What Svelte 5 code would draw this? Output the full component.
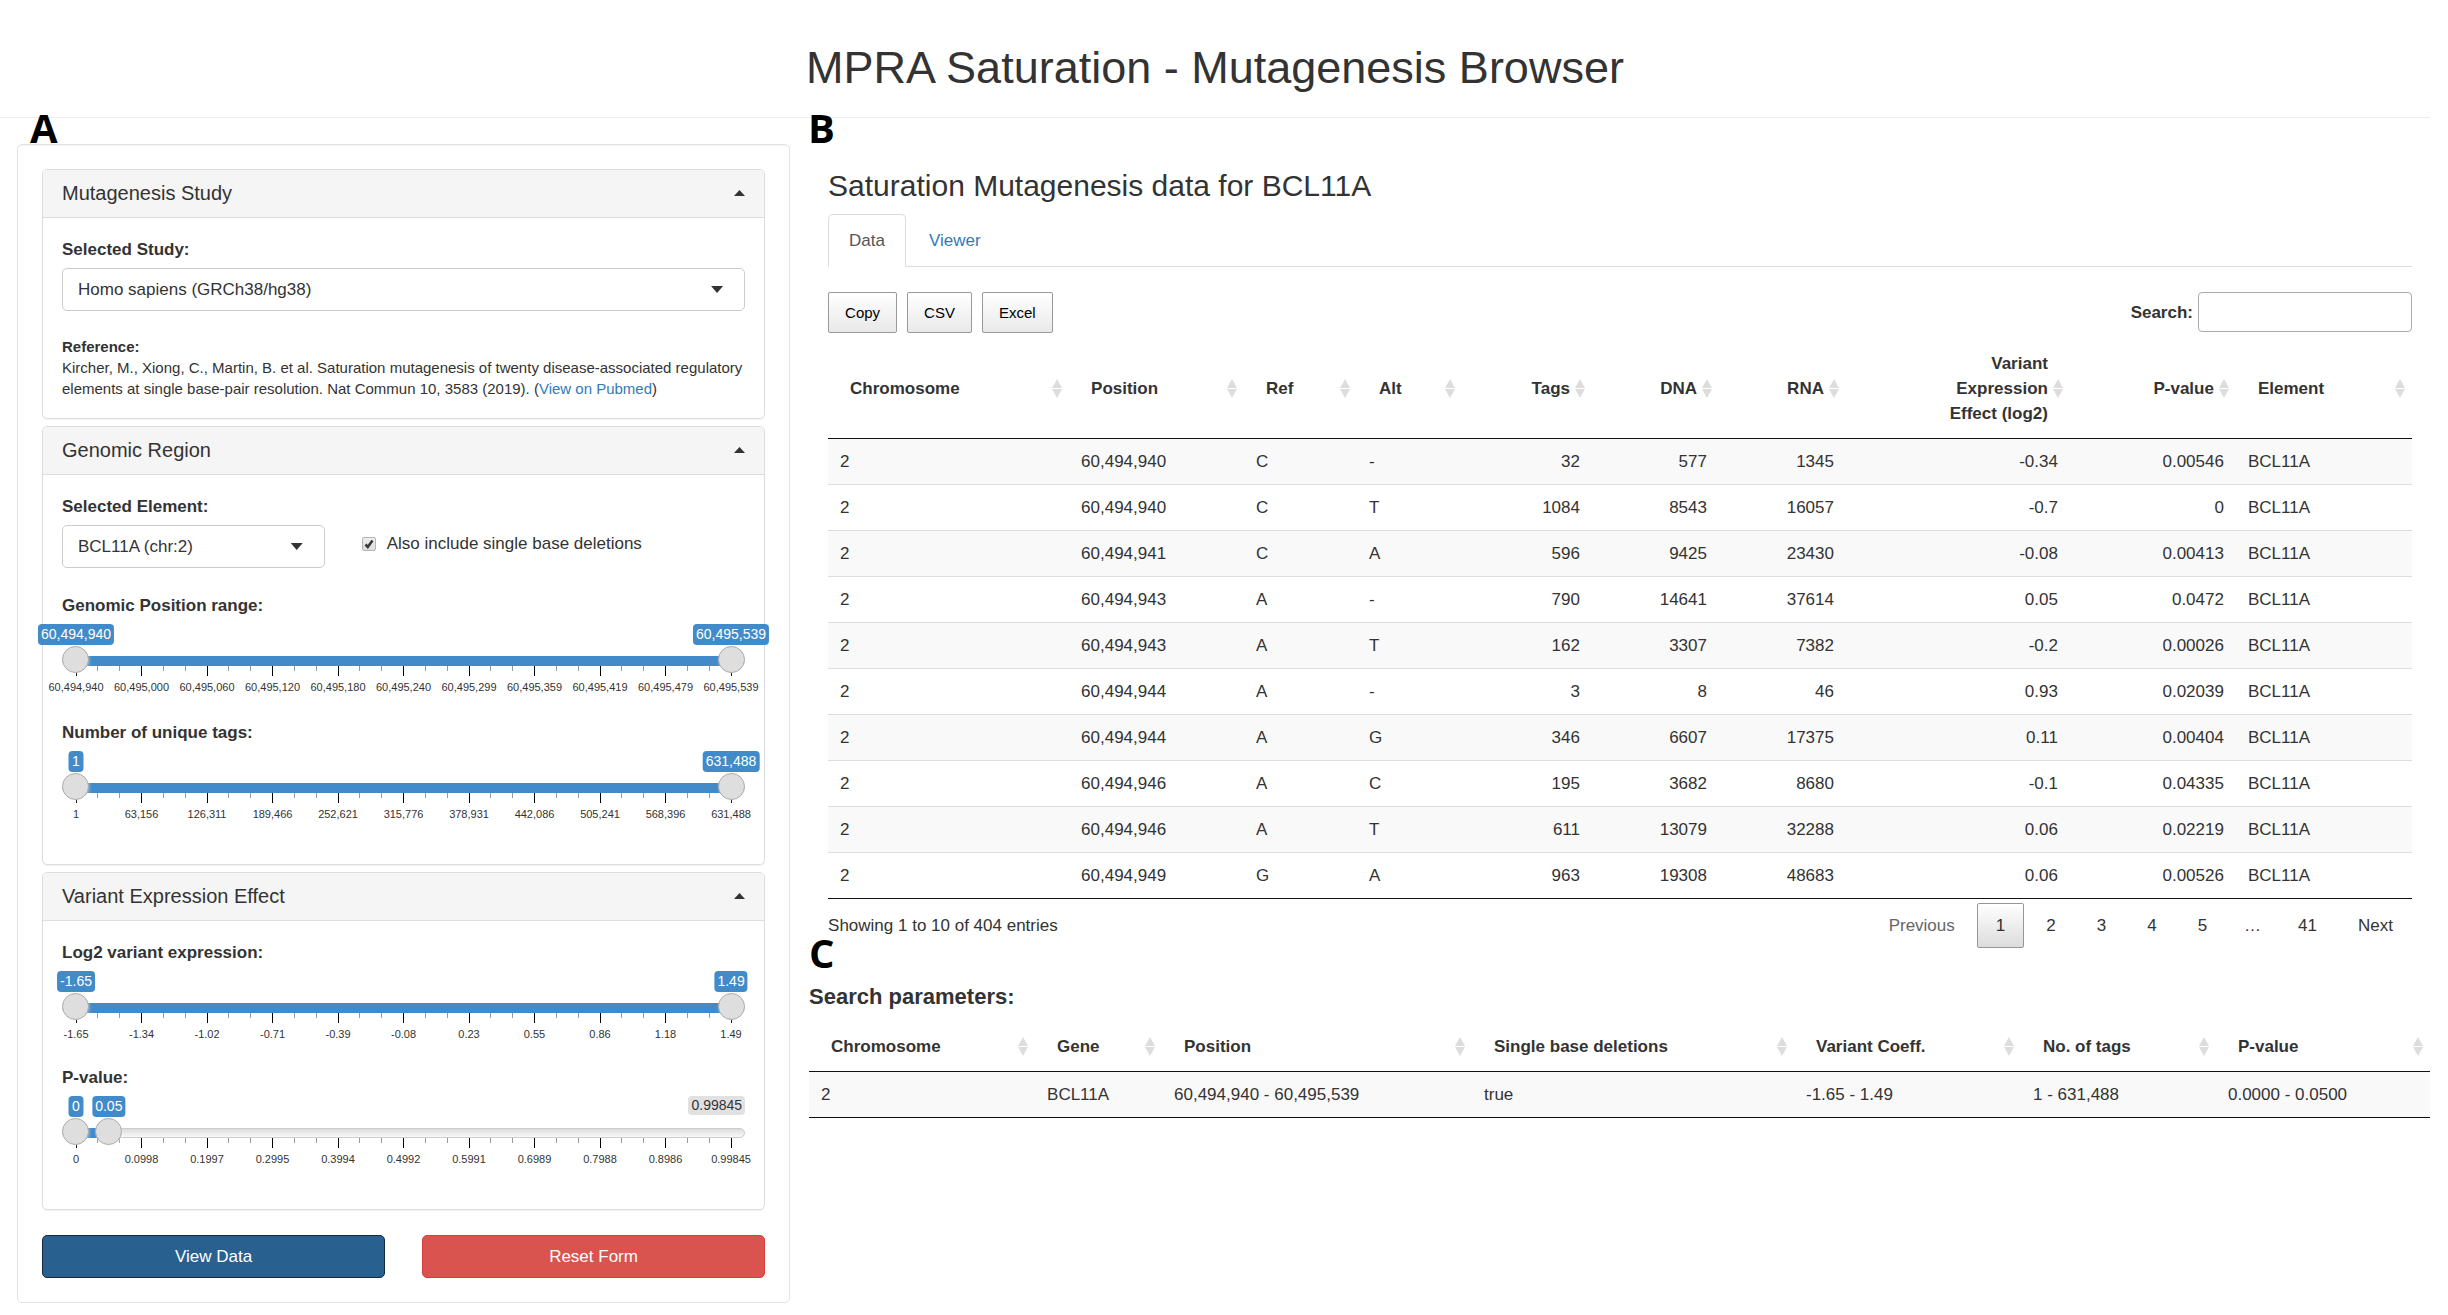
<script>
  const mainColumns = [
    { label: 'Chromosome', width: 241 },
    { label: 'Position', width: 175 },
    { label: 'Ref', width: 113 },
    { label: 'Alt', width: 105 },
    { label: 'Tags', width: 130, right: true },
    { label: 'DNA', width: 127, right: true },
    { label: 'RNA', width: 127, right: true },
    { label: 'Variant\nExpression\nEffect (log2)', width: 224, right: true },
    { label: 'P-value', width: 166, right: true },
    { label: 'Element', width: 176 }
  ];

  const mainRows = [
    ['2', '60,494,940', 'C', '-', '32', '577', '1345', '-0.34', '0.00546', 'BCL11A'],
    ['2', '60,494,940', 'C', 'T', '1084', '8543', '16057', '-0.7', '0', 'BCL11A'],
    ['2', '60,494,941', 'C', 'A', '596', '9425', '23430', '-0.08', '0.00413', 'BCL11A'],
    ['2', '60,494,943', 'A', '-', '790', '14641', '37614', '0.05', '0.0472', 'BCL11A'],
    ['2', '60,494,943', 'A', 'T', '162', '3307', '7382', '-0.2', '0.00026', 'BCL11A'],
    ['2', '60,494,944', 'A', '-', '3', '8', '46', '0.93', '0.02039', 'BCL11A'],
    ['2', '60,494,944', 'A', 'G', '346', '6607', '17375', '0.11', '0.00404', 'BCL11A'],
    ['2', '60,494,946', 'A', 'C', '195', '3682', '8680', '-0.1', '0.04335', 'BCL11A'],
    ['2', '60,494,946', 'A', 'T', '611', '13079', '32288', '0.06', '0.02219', 'BCL11A'],
    ['2', '60,494,949', 'G', 'A', '963', '19308', '48683', '0.06', '0.00526', 'BCL11A']
  ];

  const paramColumns = [
    { label: 'Chromosome', width: 226 },
    { label: 'Gene', width: 127 },
    { label: 'Position', width: 310 },
    { label: 'Single base deletions', width: 322 },
    { label: 'Variant Coeff.', width: 227 },
    { label: 'No. of tags', width: 195 },
    { label: 'P-value', width: 214 }
  ];

  const paramRows = [
    ['2', 'BCL11A', '60,494,940 - 60,495,539', 'true', '-1.65 - 1.49', '1 - 631,488', '0.0000 - 0.0500']
  ];

  const sliders = $state({
    position: {
      label: 'Genomic Position range:', min: 60494940, max: 60495539, step: 1, low: 60494940, high: 60495539,
      marks: ['60,494,940', '60,495,000', '60,495,060', '60,495,120', '60,495,180', '60,495,240', '60,495,299', '60,495,359', '60,495,419', '60,495,479', '60,495,539']
    },
    tags: {
      label: 'Number of unique tags:', min: 1, max: 631488, step: 1, low: 1, high: 631488,
      marks: ['1', '63,156', '126,311', '189,466', '252,621', '315,776', '378,931', '442,086', '505,241', '568,396', '631,488']
    },
    log2: {
      label: 'Log2 variant expression:', min: -1.65, max: 1.49, step: 0.01, low: -1.65, high: 1.49,
      marks: ['-1.65', '-1.34', '-1.02', '-0.71', '-0.39', '-0.08', '0.23', '0.55', '0.86', '1.18', '1.49']
    },
    pvalue: {
      label: 'P-value:', min: 0, max: 0.99845, step: 0.00001, low: 0, high: 0.05,
      marks: ['0', '0.0998', '0.1997', '0.2995', '0.3994', '0.4992', '0.5991', '0.6989', '0.7988', '0.8986', '0.99845']
    }
  });

  const ticks = Array.from({ length: 31 }, (_, i) => i);
  const pages = ['1', '2', '3', '4', '5', '…', '41'];

  let study = $state('hg38');
  let element = $state('BCL11A');
  let deletions = $state(true);
  let query = $state('');

  const share = (s, value) => (value - s.min) / (s.max - s.min);
  const format = (value) => value.toLocaleString('en-US', { maximumFractionDigits: 5 });
  const total = (columns) => columns.reduce((sum, c) => sum + c.width, 0);
</script>

{#snippet slider(key)}
  {@const s = sliders[key]}
  <div class="slider" role="group" aria-labelledby={`${key}-label`}>
    <span class="label" id={`${key}-label`}>{s.label}</span>
    <div class="tags">
      <div class="rail">
        <output class="tag" style:left={`${share(s, s.low) * 100}%`}>{format(s.low)}</output>
        <output class="tag" style:left={`${share(s, s.high) * 100}%`}>{format(s.high)}</output>
      </div>
      {#if s.high < s.max}
        <span class="limit">{format(s.max)}</span>
      {/if}
    </div>
    <div class="track">
      <div class="line"></div>
      <div class="rail">
        <div class="fill" style:margin-left={`${share(s, s.low) * 100}%`} style:width={`${(share(s, s.high) - share(s, s.low)) * 100}%`}></div>
      </div>
      <svg class="ticks" aria-hidden="true">
        {#each ticks as t}
          <line
            x1={`${(t / 30) * 100}%`} x2={`${(t / 30) * 100}%`}
            y1="0" y2={t % 3 ? 5 : 10}
            stroke={t % 3 ? '#999' : '#000'} shape-rendering="crispEdges" />
        {/each}
      </svg>
      <input type="range" aria-label={`${s.label} minimum`} min={s.min} max={s.max} step={s.step} bind:value={s.low} />
      <input type="range" aria-label={`${s.label} maximum`} min={s.min} max={s.max} step={s.step} bind:value={s.high} />
    </div>
    <div class="marks">
      {#each s.marks as mark}
        <span>{mark}</span>
      {/each}
    </div>
  </div>
{/snippet}

{#snippet grid(columns, rows)}
  <table>
    <colgroup>
      {#each columns as c}
        <col style:width={`${(c.width / total(columns)) * 100}%`} />
      {/each}
    </colgroup>
    <thead>
      <tr>
        {#each columns as c}
          <th scope="col">
            <button class="sort" class:right={c.right}>
              <span>{c.label}</span>
              <svg viewBox="0 0 10 19" width="10" height="19" aria-hidden="true">
                <path d="M5 0L10 9H0zM5 19L10 10H0z" fill="#ddd" />
              </svg>
            </button>
          </th>
        {/each}
      </tr>
    </thead>
    <tbody>
      {#each rows as row}
        <tr>
          {#each row as cell, i}
            <td class:right={columns[i].right}>{cell}</td>
          {/each}
        </tr>
      {/each}
    </tbody>
  </table>
{/snippet}

{#snippet heading(title)}
  <h2>
    <button class="toggle" aria-expanded="true">
      {title}
      <svg viewBox="0 0 11 6" width="11" height="6" aria-hidden="true"><path d="M0 6L5.500 0L11 6z" fill="#333" /></svg>
    </button>
  </h2>
{/snippet}

<div class="page">
  <header>
    <h1>MPRA Saturation - Mutagenesis Browser</h1>
  </header>

  <div class="columns">
    <form class="sidebar" onsubmit={(e) => e.preventDefault()}>
      <span class="letter letter-a">A</span>

      <section class="panel">
        {@render heading('Mutagenesis Study')}
        <div class="body">
          <label class="label" for="study">Selected Study:</label>
          <div class="select">
            <select id="study" bind:value={study}>
              <option value="hg38">Homo sapiens (GRCh38/hg38)</option>
            </select>
          </div>
          <p class="reference">
            <strong>Reference:</strong><br />
            Kircher, M., Xiong, C., Martin, B. et al. Saturation mutagenesis of twenty disease-associated regulatory
            elements at single base-pair resolution. Nat Commun 10, 3583 (2019). (<a href="#pubmed">View on Pubmed</a>)
          </p>
        </div>
      </section>

      <section class="panel">
        {@render heading('Genomic Region')}
        <div class="body">
          <label class="label" for="element">Selected Element:</label>
          <div class="pair">
            <div class="select">
              <select id="element" bind:value={element}>
                <option value="BCL11A">BCL11A (chr:2)</option>
              </select>
            </div>
            <label class="check">
              <span class="box">
                <input type="checkbox" bind:checked={deletions} />
                {#if deletions}
                  <svg viewBox="0 0 14 14" width="14" height="14" aria-hidden="true">
                    <path d="M3.500 7.500L5.800 10L10.500 3.500" fill="none" stroke="#3a3a3a" stroke-width="2.600" />
                  </svg>
                {/if}
              </span>
              Also include single base deletions
            </label>
          </div>
          <div class="sliders region">
            {@render slider('position')}
            {@render slider('tags')}
          </div>
        </div>
      </section>

      <section class="panel">
        {@render heading('Variant Expression Effect')}
        <div class="body">
          <div class="sliders">
            {@render slider('log2')}
            {@render slider('pvalue')}
          </div>
        </div>
      </section>

      <div class="actions">
        <button class="action view">View Data</button>
        <button class="action reset" type="reset">Reset Form</button>
      </div>
    </form>

    <main>
      <section class="results">
        <span class="letter letter-b">B</span>
        <h3>Saturation Mutagenesis data for BCL11A</h3>
        <nav class="tabs">
          <a class="active" href="#data">Data</a>
          <a href="#viewer">Viewer</a>
        </nav>
        <div class="toolbar">
          <button>Copy</button>
          <button>CSV</button>
          <button>Excel</button>
          <label class="search">Search: <input type="search" bind:value={query} /></label>
        </div>
        {@render grid(mainColumns, mainRows)}
        <div class="footer">
          <span>Showing 1 to 10 of 404 entries</span>
          <nav class="pagination" aria-label="Pages">
            <button disabled>Previous</button>
            {#each pages as page}
              {#if page === '…'}
                <span>{page}</span>
              {:else}
                <button class:current={page === '1'}>{page}</button>
              {/if}
            {/each}
            <button>Next</button>
          </nav>
        </div>
      </section>

      <section class="parameters">
        <span class="letter letter-c">C</span>
        <h4>Search parameters:</h4>
        {@render grid(paramColumns, paramRows)}
      </section>
    </main>
  </div>
</div>

<style>
  :global(body) {
    background: #fff;
  }

  .page,
  .page :global(*) {
    box-sizing: border-box;
  }

  .page {
    margin-right: 18px;
    color: #333;
    font: 17px/25px 'Liberation Sans', Arial, sans-serif;
  }

  h1, h2, h3, h4, p {
    margin: 0;
    font-weight: 400;
  }

  button, input, select {
    margin: 0;
    color: inherit;
    font: inherit;
  }

  button {
    cursor: pointer;
  }

  a {
    color: #337ab7;
    text-decoration: none;
  }

  header {
    padding: 43px 0 24px;
    border-bottom: 1px solid #eee;
    text-align: center;
  }

  h1 {
    font-size: 45px;
    line-height: 50px;
  }

  .columns {
    display: grid;
    grid-template-columns: minmax(0, 31fr) minmax(0, 65fr);
    column-gap: 19px;
    align-items: start;
    padding-left: 17px;
  }

  .letter {
    position: absolute;
    color: #000;
    font: 700 40px/40px 'Open Sans', sans-serif;
  }

  .letter-a { left: 12px; top: -37px; }
  .letter-b { left: -1px; top: -10px; }
  .letter-c { left: 0; top: -51px; }

  .sidebar {
    position: relative;
    margin-top: 26px;
    padding: 24px;
    border: 1px solid #e3e3e3;
    border-radius: 5px;
    box-shadow: inset 0 1px 1px rgba(0, 0, 0, 0.05);
  }

  .panel {
    margin-bottom: 7px;
    border: 1px solid #ddd;
    border-radius: 5px;
    box-shadow: 0 1px 1px rgba(0, 0, 0, 0.05);
  }

  .toggle {
    display: flex;
    justify-content: space-between;
    align-items: center;
    width: 100%;
    padding: 12px 19px 13px;
    border: 0;
    border-bottom: 1px solid #ddd;
    border-radius: 4px 4px 0 0;
    background: #f5f5f5;
    font-size: 20px;
    line-height: 22px;
  }

  .body {
    padding: 19px 19px 18px;
  }

  .label {
    display: block;
    margin-bottom: 6px;
    font-weight: 700;
  }

  .select {
    display: grid;
    align-items: center;
  }

  .select select {
    grid-area: 1 / 1;
    width: 100%;
    height: 43px;
    padding: 0 15px;
    border: 1px solid #ccc;
    border-radius: 5px;
    background: #fff;
    appearance: none;
  }

  .select::after {
    grid-area: 1 / 1;
    justify-self: end;
    width: 12px;
    height: 7px;
    margin-right: 22px;
    background: #333;
    clip-path: polygon(0 0, 100% 0, 50% 100%);
    content: '';
    pointer-events: none;
  }

  .reference {
    margin: 25px 0 1px;
    font-size: 15px;
    line-height: 21px;
  }

  .pair {
    display: grid;
    grid-template-columns: 5fr 8fr;
  }

  .check {
    display: flex;
    gap: 11px;
    align-items: center;
    height: 37px;
    padding-left: 37px;
  }

  .box {
    display: grid;
  }

  .box input {
    grid-area: 1 / 1;
    width: 14px;
    height: 14px;
    border: 1px solid #b4b4b4;
    border-radius: 2px;
    background: linear-gradient(#eee, #ddd);
    appearance: none;
  }

  .box svg {
    z-index: 1;
    grid-area: 1 / 1;
    pointer-events: none;
  }

  .sliders {
    display: grid;
    gap: 24px;
    padding-bottom: 25px;
  }

  .region {
    gap: 26px;
    margin-top: 25px;
  }

  .tags {
    display: grid;
    height: 22px;
  }

  .rail {
    position: relative;
    grid-area: 1 / 1;
    margin: 0 14px;
  }

  .tag {
    position: absolute;
    min-width: 15px;
    padding: 0 3px;
    border-radius: 4px;
    background: #428bca;
    color: #fff;
    font-size: 14px;
    line-height: 21px;
    text-align: center;
    white-space: nowrap;
    transform: translateX(-50%);
  }

  .limit {
    grid-area: 1 / 1;
    place-self: start end;
    padding: 0 3px;
    border-radius: 4px;
    background: #e1e1e1;
    font-size: 14px;
    line-height: 19px;
  }

  .track {
    display: grid;
    height: 30px;
  }

  .line {
    grid-area: 1 / 1;
    height: 10px;
    margin-top: 10px;
    border: 1px solid #ccc;
    border-radius: 10px;
    background: linear-gradient(#ddd, #f9f9f9);
  }

  .fill {
    height: 10px;
    margin-top: 10px;
    background: #428bca;
  }

  .ticks {
    grid-area: 1 / 1;
    align-self: end;
    width: calc(100% - 28px);
    height: 10px;
    margin: 0 14px;
    overflow: visible;
  }

  .track input {
    z-index: 1;
    grid-area: 1 / 1;
    width: 100%;
    height: 27px;
    background: none;
    appearance: none;
    pointer-events: none;
  }

  .track input::-webkit-slider-thumb {
    width: 27px;
    height: 27px;
    border: 1px solid #aaa;
    border-radius: 50%;
    background: #dedede;
    box-shadow: 1px 1px 3px rgba(255, 255, 255, 0.3);
    appearance: none;
    cursor: pointer;
    pointer-events: auto;
  }

  .marks {
    display: flex;
    justify-content: space-between;
    margin: 4px 14px 0;
    font-size: 11px;
    line-height: 14px;
  }

  .marks span {
    display: flex;
    justify-content: center;
    width: 0;
    white-space: nowrap;
  }

  .actions {
    display: grid;
    grid-template-columns: 1fr 1fr;
    gap: 37px;
    margin-top: 25px;
  }

  .action {
    height: 43px;
    border: 1px solid;
    border-radius: 5px;
    color: #fff;
  }

  .view {
    border-color: #122b40;
    background: #286090;
  }

  .reset {
    border-color: #d43f3a;
    background: #d9534f;
  }

  .results {
    position: relative;
    padding: 51px 18px 0 19px;
  }

  h3 {
    font-size: 30px;
    line-height: 33px;
  }

  .tabs {
    display: flex;
    gap: 2px;
    margin-top: 12px;
    border-bottom: 1px solid #ddd;
  }

  .tabs a {
    margin-bottom: -1px;
    padding: 13px 20px;
    border: 1px solid transparent;
    border-radius: 5px 5px 0 0;
  }

  .tabs .active {
    border-color: #ddd #ddd #fff;
    color: #555;
  }

  .toolbar {
    display: flex;
    gap: 10px;
    margin: 25px 0 6px;
  }

  .toolbar button {
    height: 41px;
    padding: 0 16px 1px;
    border: 1px solid #999;
    border-radius: 2px;
    background: linear-gradient(#fff, #e9e9e9);
    color: #000;
    font-size: 15px;
  }

  .search {
    display: flex;
    gap: 5px;
    align-items: center;
    height: 40px;
    margin-left: auto;
    font-weight: 700;
  }

  .search input {
    width: 214px;
    height: 40px;
    padding: 0 6px;
    border: 1px solid #aaa;
    border-radius: 4px;
    background: #fff;
    font-weight: 400;
    appearance: none;
  }

  table {
    width: 100%;
    border-bottom: 1px solid #111;
    border-collapse: separate;
    border-spacing: 0;
    table-layout: fixed;
  }

  th {
    padding: 0;
    border-bottom: 1px solid #111;
  }

  .sort {
    display: flex;
    gap: 5px;
    align-items: center;
    width: 100%;
    padding: 12px 7px 12px 22px;
    border: 0;
    background: none;
    font-weight: 700;
    text-align: left;
  }

  .sort span {
    flex: 1;
    white-space: pre;
  }

  .right {
    text-align: right;
  }

  td {
    padding: 10px 12px;
  }

  tbody tr:nth-child(odd) {
    background: #f9f9f9;
  }

  tbody tr + tr td {
    border-top: 1px solid #ddd;
  }

  .footer {
    display: flex;
    justify-content: space-between;
    align-items: center;
    padding-top: 4px;
  }

  .pagination {
    display: flex;
    gap: 3px;
    color: #333;
  }

  .pagination button,
  .pagination span {
    padding: 9px 18px;
    border: 1px solid transparent;
    border-radius: 2px;
    background: none;
    text-align: center;
  }

  .pagination span {
    padding: 9px 14px;
  }

  .pagination button:disabled {
    color: #666;
  }

  .pagination .current {
    border-color: #979797;
    background: linear-gradient(#fff, #dcdcdc);
  }

  .parameters {
    position: relative;
    margin-top: 36px;
  }

  h4 {
    margin-bottom: 13px;
    font-size: 22px;
    font-weight: 700;
  }
</style>
